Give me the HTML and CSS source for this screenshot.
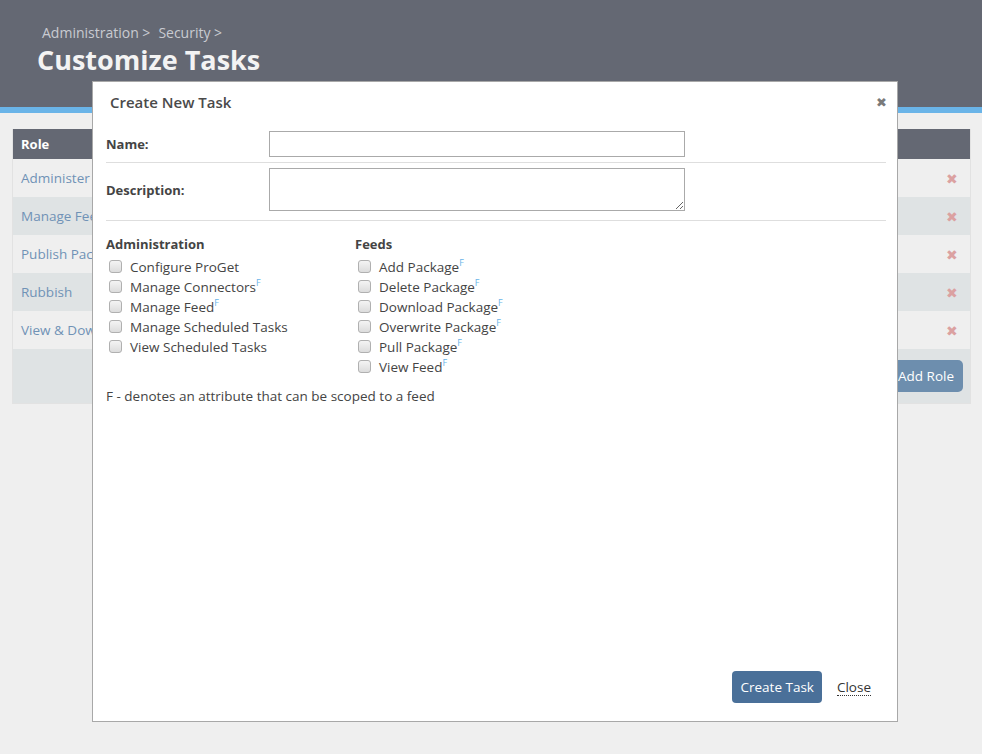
FILE: index.html
```html
<!DOCTYPE html>
<html>
<head>
<meta charset="utf-8">
<link rel="stylesheet" href="styles.css">
</head>
<body>
<header class="page-header">
  <div class="crumbs"><span>Administration &gt;</span><span>Security &gt;</span></div>
  <h1 class="page-title">Customize Tasks</h1>
</header>
<div class="stripe"></div>
<main class="content">
  <div class="roles">
    <div class="roles-head">Role</div>
    <div class="role-row"><a class="role-link">Administer</a><span class="del">&#x2716;</span></div>
    <div class="role-row alt"><a class="role-link">Manage Feeds</a><span class="del">&#x2716;</span></div>
    <div class="role-row"><a class="role-link">Publish Packages</a><span class="del">&#x2716;</span></div>
    <div class="role-row alt"><a class="role-link">Rubbish</a><span class="del">&#x2716;</span></div>
    <div class="role-row"><a class="role-link">View &amp; Download Packages</a><span class="del">&#x2716;</span></div>
    <div class="roles-foot"><button class="add-role">Add Role</button></div>
  </div>
</main>

<div class="modal">
  <div class="modal-title">
    <span>Create New Task</span>
    <span class="modal-x">&#x2716;</span>
  </div>
  <div class="modal-body">
    <div class="field field-name">
      <label class="field-label">Name:</label>
      <input class="text-input" type="text">
    </div>
    <div class="field field-desc">
      <label class="field-label">Description:</label>
      <textarea class="text-area"></textarea>
    </div>
    <div class="groups">
      <div class="group group-admin">
        <div class="group-title">Administration</div>
        <label class="opt"><input type="checkbox" class="cb"><span>Configure ProGet</span></label>
        <label class="opt"><input type="checkbox" class="cb"><span>Manage Connectors<sup class="scope">F</sup></span></label>
        <label class="opt"><input type="checkbox" class="cb"><span>Manage Feed<sup class="scope">F</sup></span></label>
        <label class="opt"><input type="checkbox" class="cb"><span>Manage Scheduled Tasks</span></label>
        <label class="opt"><input type="checkbox" class="cb"><span>View Scheduled Tasks</span></label>
      </div>
      <div class="group">
        <div class="group-title">Feeds</div>
        <label class="opt"><input type="checkbox" class="cb"><span>Add Package<sup class="scope">F</sup></span></label>
        <label class="opt"><input type="checkbox" class="cb"><span>Delete Package<sup class="scope">F</sup></span></label>
        <label class="opt"><input type="checkbox" class="cb"><span>Download Package<sup class="scope">F</sup></span></label>
        <label class="opt"><input type="checkbox" class="cb"><span>Overwrite Package<sup class="scope">F</sup></span></label>
        <label class="opt"><input type="checkbox" class="cb"><span>Pull Package<sup class="scope">F</sup></span></label>
        <label class="opt"><input type="checkbox" class="cb"><span>View Feed<sup class="scope">F</sup></span></label>
      </div>
    </div>
    <p class="note">F - denotes an attribute that can be scoped to a feed</p>
  </div>
  <div class="modal-foot">
    <button class="primary">Create Task</button>
    <a class="close-link">Close</a>
  </div>
</div>
</body>
</html>
```
FILE: styles.css
```css
html, body {
  margin: 0;
  padding: 0;
}
body {
  background: #efefef;
  font-family: "Open Sans", "Liberation Sans", sans-serif;
  font-size: 13px;
  color: #444;
  height: 754px;
  overflow: hidden;
}
.page-header {
  background: #646873;
  height: 107px;
  padding: 0 0 0 37px;
  box-sizing: border-box;
  overflow: hidden;
}
.crumbs {
  padding: 24px 0 0 5px;
  color: #c9cbd1;
  font-size: 14px;
  line-height: 18px;
  display: flex;
  gap: 8px;
}
.page-title {
  margin: 1px 0 0 0;
  color: #f3f3f3;
  font-size: 27px;
  font-weight: 700;
  line-height: 34px;
}
.stripe {
  height: 6px;
  background: #6ab4e8;
}
.content {
  padding: 16px 11px 0 12px;
}
.roles {
  border: 1px solid #e2e2e2;
  border-top: none;
}
.roles-head {
  background: #646873;
  color: #fff;
  font-weight: 700;
  height: 30px;
  line-height: 30px;
  padding-left: 8px;
  font-size: 13px;
}
.role-row {
  height: 38px;
  display: flex;
  align-items: center;
  justify-content: space-between;
  padding: 0 12px 0 8px;
  background: #efefef;
}
.role-row.alt {
  background: #dfe3e4;
}
.role-link {
  color: #7092b6;
  font-size: 13.5px;
}
.del {
  color: #dba1a1;
  font-size: 14px;
}
.roles-foot {
  height: 54px;
  background: #dfe3e4;
  display: flex;
  justify-content: flex-end;
  align-items: center;
  padding-right: 7px;
}
.add-role {
  background: #6d8eae;
  color: #fff;
  border: none;
  border-radius: 5px;
  height: 32px;
  padding: 0 9px;
  font-family: inherit;
  font-size: 13.5px;
}

.modal {
  position: absolute;
  left: 92px;
  top: 81px;
  width: 806px;
  height: 641px;
  box-sizing: border-box;
  background: #fff;
  border: 1px solid #a8a8a8;
  display: flex;
  flex-direction: column;
}
.modal-title {
  height: 39px;
  display: flex;
  align-items: center;
  justify-content: space-between;
  padding: 0 10px 0 17px;
  font-size: 15px;
  color: #4a4a4a;
}
.modal-title span:first-child {
  font-weight: 600;
}
.modal-x {
  color: #7a7a7a;
  font-size: 13px;
}
.modal-body {
  padding: 0 11px 0 13px;
}
.field {
  display: flex;
  align-items: center;
  border-bottom: 1px solid #dedede;
}
.field-name {
  padding: 10px 0 5px;
}
.field-desc {
  padding: 5px 0 9px;
}
.field-label {
  width: 163px;
  font-weight: 700;
  color: #444;
}
.text-input {
  width: 416px;
  height: 26px;
  box-sizing: border-box;
  border: 1px solid #aaa;
  margin: 0;
  padding: 2px 4px;
}
.text-area {
  width: 416px;
  height: 43px;
  box-sizing: border-box;
  border: 1px solid #aaa;
  margin: 0;
  padding: 2px 4px;
  resize: vertical;
  display: block;
}
.groups {
  display: flex;
  padding-top: 14px;
}
.group-admin {
  width: 249px;
}
.group-title {
  font-weight: 700;
  line-height: 18px;
  margin-bottom: 4px;
  color: #444;
}
.opt {
  display: flex;
  align-items: center;
  height: 20px;
  line-height: 20px;
  font-size: 13.5px;
  color: #444;
}
.cb {
  appearance: none;
  -webkit-appearance: none;
  width: 13px;
  height: 13px;
  margin: 0 8px 2px 3px;
  border: 1px solid #b0b0b0;
  border-radius: 3px;
  background: linear-gradient(#f4f4f4, #dcdcdc);
  box-sizing: border-box;
  flex: none;
}
.scope {
  color: #6ab4e8;
  font-size: 9px;
  vertical-align: 6px;
  line-height: 0;
}
.note {
  margin: 10px 0 0;
  line-height: 18px;
  font-size: 13.5px;
  color: #444;
}
.modal-foot {
  margin-top: auto;
  display: flex;
  justify-content: flex-end;
  align-items: center;
  gap: 15px;
  padding: 0 26px 18px 0;
}
.primary {
  background: #4a7099;
  color: #fff;
  border: none;
  border-radius: 4px;
  height: 32px;
  padding: 0 8px;
  font-family: inherit;
  font-size: 13.5px;
}
.close-link {
  color: #333;
  border-bottom: 1px dotted #333;
  line-height: 16px;
  font-size: 13.5px;
}
```
